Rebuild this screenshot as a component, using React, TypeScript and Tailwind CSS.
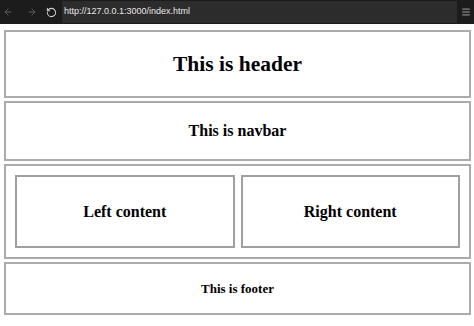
import { ArrowLeft, ArrowRight, RotateCw, Menu } from "lucide-react";

export default function App() {
  return (
    <div className="w-[474px] h-[326px] bg-white overflow-hidden font-['Liberation_Serif',serif] text-black">
      <div className="h-6 bg-[#1c1c1c] flex items-center pl-[3px] pr-[3px]">
        <ArrowLeft className="w-[10px] h-[10px] text-[#6a6a6a]" strokeWidth={2} />
        <ArrowRight className="w-[10px] h-[10px] ml-[14px] text-[#6a6a6a]" strokeWidth={2} />
        <RotateCw className="w-[11px] h-[11px] ml-[9px] text-[#d0d0d0] -scale-x-100" strokeWidth={2.2} />
        <div className="ml-[5px] h-[22px] flex-1 bg-[#2c2c2c] flex items-center pl-[2px] font-['Liberation_Sans',sans-serif] text-[9px] text-[#e8e8e8]">
          http://127.0.0.1:3000/index.html
        </div>
        <Menu className="w-[10px] h-[10px] ml-[4px] text-[#bdbdbd]" strokeWidth={2} />
      </div>
      <div className="pl-[4px] pr-[3px] pt-[6px] flex flex-col gap-[3px]">
        <div className="h-[68px] border-2 border-[#ababab] flex items-center justify-center">
          <h1 className="text-[21.5px] font-bold">This is header</h1>
        </div>
        <div className="h-[60px] border-2 border-[#ababab] flex items-center justify-center">
          <h2 className="text-[16px] font-bold">This is navbar</h2>
        </div>
        <div className="h-[95px] border-2 border-[#ababab] p-[9px] flex gap-[6px]">
          <div className="flex-1 border-2 border-[#a0a0a0] flex items-center justify-center">
            <h3 className="text-[16px] font-bold">Left content</h3>
          </div>
          <div className="flex-1 border-2 border-[#a0a0a0] flex items-center justify-center">
            <h3 className="text-[16px] font-bold">Right content</h3>
          </div>
        </div>
        <div className="h-[53px] border-2 border-[#ababab] flex items-center justify-center">
          <h4 className="text-[13px] font-bold">This is footer</h4>
        </div>
      </div>
    </div>
  );
}
